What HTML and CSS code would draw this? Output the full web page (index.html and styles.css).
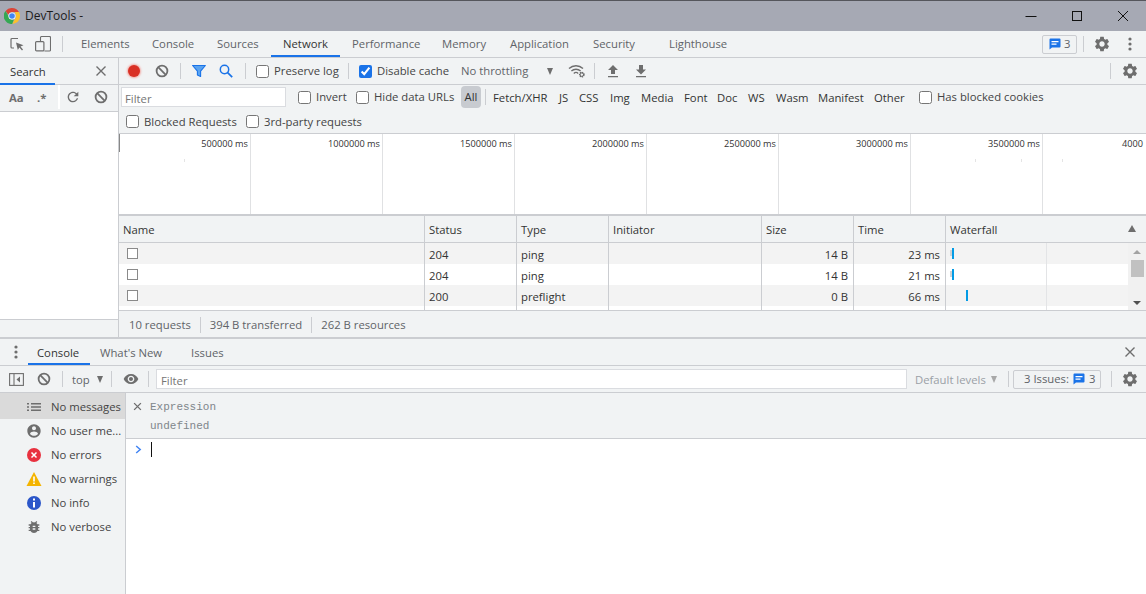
FILE: index.html
```html
<!DOCTYPE html>
<html lang="en">
<head>
<meta charset="utf-8">
<title>DevTools</title>
<link rel="stylesheet" href="styles.css">
</head>
<body>
<svg class="defs" width="0" height="0" aria-hidden="true">
  <symbol id="gear" viewBox="0 0 24 24"><path d="M19.14,12.94c.04-.3.06-.61.06-.94 0-.32-.02-.64-.07-.94l2.03-1.58c.18-.14.23-.41.12-.61l-1.92-3.32c-.12-.22-.37-.29-.59-.22l-2.39.96c-.5-.38-1.03-.7-1.62-.94l-.36-2.54c-.04-.24-.24-.41-.48-.41h-3.84c-.24 0-.43.17-.47.41l-.36 2.54c-.59.24-1.13.57-1.62.94l-2.39-.96c-.22-.08-.47 0-.59.22L2.74 8.87c-.12.21-.08.47.12.61l2.03 1.58c-.05.3-.09.63-.09.94s.02.64.07.94l-2.03 1.58c-.18.14-.23.41-.12.61l1.92 3.32c.12.22.37.29.59.22l2.39-.96c.5.38 1.03.7 1.62.94l.36 2.54c.05.24.24.41.48.41h3.84c.24 0 .44-.17.47-.41l.36-2.54c.59-.24 1.13-.56 1.62-.94l2.39.96c.22.08.47 0 .59-.22l1.92-3.32c.12-.22.07-.47-.12-.61l-2.01-1.58zM12 15.6c-1.98 0-3.6-1.62-3.6-3.6s1.62-3.6 3.6-3.6 3.6 1.62 3.6 3.6-1.62 3.6-3.6 3.6z" fill="#6e6e6e"/></symbol>
  <symbol id="block" viewBox="0 0 14 14"><circle cx="7" cy="7" r="5.4" fill="none" stroke="#6e6e6e" stroke-width="1.8"/><path d="M3.2 3.2l7.6 7.6" stroke="#6e6e6e" stroke-width="1.8"/></symbol>
  <symbol id="msg" viewBox="0 0 12 12"><path d="M1.5 0.5h9a1 1 0 0 1 1 1v7a1 1 0 0 1-1 1H3L0.5 11.5V1.5a1 1 0 0 1 1-1z" fill="#1a73e8"/><path d="M2.5 3h7v1.2h-7zM2.5 5.5h5v1.2h-5z" fill="#fff"/></symbol>
  <symbol id="close" viewBox="0 0 12 12"><path d="M1.5 1.5l9 9M10.5 1.5l-9 9" stroke="#6e6e6e" stroke-width="1.4" fill="none"/></symbol>
</svg>

<header class="titlebar">
  <svg class="chrome-logo" viewBox="0 0 16 16" width="16" height="16">
    <path d="M8 0a8 8 0 0 1 6.93 4H8a4 4 0 0 0-3.8 2.7L1.6 2.9A8 8 0 0 1 8 0z" fill="#db4437"/>
    <path d="M14.93 4A8 8 0 0 1 8.2 16l3.3-5.9A4 4 0 0 0 11.4 5.9L10.9 4z" fill="#fbc02d"/>
    <path d="M1.6 2.9l3.3 5.9a4 4 0 0 0 5 2.7L8.2 16A8 8 0 0 1 1.6 2.9z" fill="#34a853"/>
    <circle cx="8" cy="8" r="3.6" fill="#fff"/><circle cx="8" cy="8" r="2.8" fill="#4285f4"/>
  </svg>
  <span class="title-text">DevTools -</span>
  <div class="win-controls">
    <svg width="12" height="12" viewBox="0 0 12 12"><path d="M0.5 6.5h11" stroke="#111" fill="none"/></svg>
    <svg width="12" height="12" viewBox="0 0 12 12"><rect x="1.5" y="1.5" width="9" height="9" fill="none" stroke="#111"/></svg>
    <svg width="12" height="12" viewBox="0 0 12 12"><path d="M1 1l10 10M11 1L1 11" stroke="#111" fill="none"/></svg>
  </div>
</header>

<nav class="main-toolbar">
  <div class="mt-icons">
    <svg width="16" height="16" viewBox="0 0 16 16"><path d="M9 2.5H3a1 1 0 0 0-1 1V11a1 1 0 0 0 1 1h2" fill="none" stroke="#6e6e6e" stroke-width="1.2"/><path d="M7 6.5l7.5 2.8-3 1.2 2.5 3-1 .9-2.6-3-1.6 2.6z" fill="#6e6e6e"/></svg>
    <svg width="16" height="16" viewBox="0 0 16 16"><path d="M5.500 5V1.500a1 1 0 0 1 1-1h8a1 1 0 0 1 1 1V14a1 1 0 0 1-1 1H9.500" fill="none" stroke="#6e6e6e" stroke-width="1.100"/><rect x="0.6" y="5.600" width="8.300" height="9.300" rx="1" fill="none" stroke="#6e6e6e" stroke-width="1.200"/></svg>
  </div>
  <span class="sep mt-sep"></span>
  <div class="main-tabs">
    <span class="tab">Elements</span><span class="tab">Console</span><span class="tab">Sources</span><span class="tab active">Network</span><span class="tab">Performance</span><span class="tab">Memory</span><span class="tab">Application</span><span class="tab">Security</span><span class="tab">Lighthouse</span>
  </div>
  <div class="mt-right">
    <span class="issue-chip"><svg width="12" height="12"><use href="#msg"/></svg>3</span>
    <span class="sep"></span>
    <svg class="ic-gear" width="18" height="18"><use href="#gear"/></svg>
    <svg class="ic-dots" width="4" height="14" viewBox="0 0 4 14"><circle cx="2" cy="2" r="1.6" fill="#6e6e6e"/><circle cx="2" cy="7" r="1.6" fill="#6e6e6e"/><circle cx="2" cy="12" r="1.6" fill="#6e6e6e"/></svg>
  </div>
</nav>

<section class="top-pane">
  <aside class="search-panel">
    <div class="search-head">
      <span class="search-tab">Search</span>
      <svg class="search-close" width="12" height="12"><use href="#close"/></svg>
    </div>
    <div class="search-tools">
      <span class="aa">Aa</span><span class="regex">.*</span>
      <span class="search-btns">
        <svg width="16" height="16" viewBox="0 0 24 24"><path d="M17.65 6.35C16.2 4.9 14.21 4 12 4c-4.42 0-7.99 3.58-7.99 8s3.57 8 7.99 8c3.73 0 6.84-2.55 7.73-6h-2.08c-.82 2.33-3.04 4-5.65 4-3.31 0-6-2.69-6-6s2.69-6 6-6c1.66 0 3.14.69 4.22 1.78L13 11h7V4l-2.35 2.35z" fill="#6e6e6e"/></svg>
        <svg width="14" height="14"><use href="#block"/></svg>
      </span>
    </div>
    <div class="search-body"></div>
    <div class="search-foot"></div>
  </aside>

  <main class="network">
    <div class="net-toolbar">
      <span class="record"></span>
      <svg class="net-clear" width="14" height="14"><use href="#block"/></svg>
      <span class="sep s-a"></span>
      <svg class="net-filter" width="14" height="14" viewBox="0 0 14 14"><path d="M0.6 1.5h12.8L8.6 7.2v5.3l-3.2-1.6V7.2z" fill="#5aa3f0" stroke="#1a73e8" stroke-width="1.1" stroke-linejoin="round"/></svg>
      <svg class="net-search" width="14" height="14" viewBox="0 0 14 14"><circle cx="5.5" cy="5.5" r="4.2" fill="none" stroke="#1a73e8" stroke-width="1.5"/><path d="M8.6 8.6l4.6 4.6" stroke="#1a73e8" stroke-width="1.7"/></svg>
      <span class="sep s-b"></span>
      <label class="chk c-preserve"><input type="checkbox">Preserve log</label>
      <span class="sep s-c"></span>
      <label class="chk c-disable"><input type="checkbox" checked>Disable cache</label>
      <span class="throttle">No throttling</span>
      <span class="arrow a-throttle"></span>
      <svg class="net-wifi" width="18" height="14" viewBox="0 0 18 14"><path d="M1 4.5C5 .8 11 .8 15 4.5M3.4 7C6 4.6 10 4.6 12.6 7M5.8 9.4C7 8.3 9 8.3 10.2 9.4" fill="none" stroke="#6e6e6e" stroke-width="1.4"/><circle cx="13.8" cy="10.6" r="2.1" fill="none" stroke="#6e6e6e" stroke-width="1.5" stroke-dasharray="1.2 .6"/><circle cx="13.8" cy="10.6" r="1.8" fill="none" stroke="#6e6e6e"/></svg>
      <span class="sep s-d"></span>
      <svg class="net-up" width="12" height="14" viewBox="0 0 12 14"><path d="M6 1l5 5H8v4H4V6H1zM1 12h10v1.2H1z" fill="#6e6e6e"/></svg>
      <svg class="net-down" width="12" height="14" viewBox="0 0 12 14"><path d="M4 1h4v4.500h3L6 10.500 1 5.500h3zM1 12h10v1.200H1z" fill="#6e6e6e"/></svg>
      <span class="spacer"></span>
      <span class="sep s-e"></span>
      <svg class="net-gear" width="18" height="18"><use href="#gear"/></svg>
    </div>

    <div class="filter-bar">
      <div class="filter-row">
        <span class="filter-input">Filter</span>
        <label class="chk f-invert"><input type="checkbox">Invert</label>
        <label class="chk f-hide"><input type="checkbox">Hide data URLs</label>
        <span class="type-all">All</span>
        <span class="sep s-all"></span>
        <div class="types"><span>Fetch/XHR</span><span>JS</span><span>CSS</span><span>Img</span><span>Media</span><span>Font</span><span>Doc</span><span>WS</span><span>Wasm</span><span>Manifest</span><span>Other</span></div>
        <label class="chk f-cookies"><input type="checkbox">Has blocked cookies</label>
      </div>
      <div class="filter-row2">
        <label class="chk f-blocked"><input type="checkbox">Blocked Requests</label>
        <label class="chk f-third"><input type="checkbox">3rd-party requests</label>
      </div>
    </div>

    <div class="overview">
      <div class="ov-cell"><span>500000 ms</span></div>
      <div class="ov-cell"><span>1000000 ms</span></div>
      <div class="ov-cell"><span>1500000 ms</span></div>
      <div class="ov-cell"><span>2000000 ms</span></div>
      <div class="ov-cell"><span>2500000 ms</span></div>
      <div class="ov-cell"><span>3000000 ms</span></div>
      <div class="ov-cell"><span>3500000 ms</span></div>
      <div class="ov-cell"><span>4000</span></div>
      <i class="ov-handle"></i>
      <i class="ov-speck sp1"></i><i class="ov-speck sp2"></i><i class="ov-speck sp3"></i><i class="ov-speck sp4"></i>
    </div>

    <div class="table">
      <div class="t-row t-head">
        <div>Name</div><div>Status</div><div>Type</div><div>Initiator</div><div>Size</div><div>Time</div>
        <div class="t-wf">Waterfall<span class="sort-up"></span></div>
      </div>
      <div class="t-body">
        <div class="t-rows">
          <div class="t-row odd"><div><i class="cb"></i></div><div>204</div><div>ping</div><div></div><div class="r">14 B</div><div class="r">23 ms</div><div class="wf"><i class="w-wait"></i><i class="w-bar"></i><b></b></div></div>
          <div class="t-row"><div><i class="cb"></i></div><div>204</div><div>ping</div><div></div><div class="r">14 B</div><div class="r">21 ms</div><div class="wf"><i class="w-wait"></i><i class="w-bar"></i><b></b></div></div>
          <div class="t-row odd"><div><i class="cb"></i></div><div>200</div><div>preflight</div><div></div><div class="r">0 B</div><div class="r">66 ms</div><div class="wf"><i class="w-bar w-late"></i><b></b></div></div>
          <div class="t-row last"><div></div><div></div><div></div><div></div><div></div><div></div><div class="wf"><b></b></div></div>
        </div>
        <div class="scrollbar">
          <span class="sb-up"></span><span class="sb-thumb"></span><span class="sb-down"></span>
        </div>
      </div>
    </div>

    <div class="net-status">
      <span>10 requests</span><span class="sep"></span><span>394 B transferred</span><span class="sep"></span><span>262 B resources</span>
    </div>
  </main>
</section>

<section class="drawer">
  <div class="drawer-tabs">
    <svg class="ic-dots-d" width="4" height="14" viewBox="0 0 4 14"><circle cx="2" cy="2" r="1.6" fill="#6e6e6e"/><circle cx="2" cy="7" r="1.6" fill="#6e6e6e"/><circle cx="2" cy="12" r="1.6" fill="#6e6e6e"/></svg>
    <span class="dtab active">Console</span><span class="dtab">What's New</span><span class="dtab">Issues</span>
    <span class="spacer"></span>
    <svg class="drawer-close" width="12" height="12"><use href="#close"/></svg>
  </div>
  <div class="console-toolbar">
    <svg class="ct-side" width="15" height="13" viewBox="0 0 15 13"><rect x="0.6" y="0.6" width="13.800" height="11.800" fill="none" stroke="#6e6e6e" stroke-width="1.100"/><path d="M5 1v11" stroke="#6e6e6e" stroke-width="1.100"/><path d="M11 3.500v6L7.500 6.500z" fill="#6e6e6e"/></svg>
    <svg class="ct-clear" width="14" height="14"><use href="#block"/></svg>
    <span class="sep s-1"></span>
    <span class="ct-top">top</span><span class="arrow a-top"></span>
    <span class="sep s-2"></span>
    <svg class="ct-eye" width="16" height="16" viewBox="0 0 24 24"><path d="M12 4.500C7 4.500 2.730 7.610 1 12c1.730 4.390 6 7.500 11 7.500s9.270-3.110 11-7.500c-1.730-4.390-6-7.500-11-7.500zM12 17c-2.760 0-5-2.240-5-5s2.240-5 5-5 5 2.240 5 5-2.240 5-5 5zm0-8c-1.660 0-3 1.340-3 3s1.340 3 3 3 3-1.340 3-3-1.340-3-3-3z" fill="#6e6e6e"/></svg>
    <span class="sep s-3"></span>
    <span class="ct-filter">Filter</span>
    <span class="ct-levels">Default levels</span><span class="arrow a-levels"></span>
    <span class="sep s-4"></span>
    <span class="ct-issues">3 Issues: <svg width="12" height="12"><use href="#msg"/></svg> 3</span>
    <span class="sep s-5"></span>
    <svg class="ct-gear" width="18" height="18"><use href="#gear"/></svg>
  </div>
  <div class="console-main">
    <aside class="console-side">
      <div class="cs-item selected"><svg width="14" height="14" viewBox="0 0 14 14"><path d="M0 3h2v1.600H0zM4 3h10v1.600H4zM0 6.200h2v1.600H0zM4 6.200h10v1.600H4zM0 9.400h2V11H0zM4 9.400h10V11H4z" fill="#6e6e6e"/></svg>No messages</div>
      <div class="cs-item"><svg width="16" height="16" viewBox="0 0 24 24"><path d="M12 2C6.480 2 2 6.480 2 12s4.480 10 10 10 10-4.480 10-10S17.520 2 12 2zm0 3c1.660 0 3 1.340 3 3s-1.340 3-3 3-3-1.340-3-3 1.340-3 3-3zm0 14.200c-2.500 0-4.710-1.280-6-3.220.030-1.990 4-3.080 6-3.080 1.990 0 5.970 1.090 6 3.080-1.290 1.940-3.500 3.220-6 3.220z" fill="#6e6e6e"/></svg>No user me...</div>
      <div class="cs-item"><svg width="16" height="16" viewBox="0 0 16 16"><circle cx="8" cy="8" r="7" fill="#e8313f"/><path d="M5.500 5.500l5 5M10.500 5.500l-5 5" stroke="#fff" stroke-width="1.500"/></svg>No errors</div>
      <div class="cs-item"><svg width="16" height="16" viewBox="0 0 16 16"><path d="M8 1l7.500 14H.5z" fill="#f4b400"/><path d="M7.200 5.500h1.600v5H7.200zM7.200 11.500h1.600v1.600H7.200z" fill="#fff"/></svg>No warnings</div>
      <div class="cs-item"><svg width="16" height="16" viewBox="0 0 16 16"><circle cx="8" cy="8" r="7" fill="#2b56c9"/><path d="M7 3.500h2v2H7zM7 7h2v5.500H7z" fill="#fff"/></svg>No info</div>
      <div class="cs-item"><svg width="16" height="16" viewBox="0 0 24 24"><path d="M20 8h-2.810c-.45-.78-1.070-1.450-1.820-1.960L17 4.410 15.590 3l-2.170 2.170C12.960 5.060 12.490 5 12 5c-.49 0-.96.060-1.410.170L8.410 3 7 4.410l1.620 1.630C7.880 6.550 7.260 7.220 6.810 8H4v2h2.090c-.050.330-.090.660-.090 1v1H4v2h2v1c0 .340.040.670.090 1H4v2h2.810c1.040 1.790 2.970 3 5.190 3s4.150-1.210 5.190-3H20v-2h-2.090c.050-.330.090-.660.090-1v-1h2v-2h-2v-1c0-.340-.040-.670-.090-1H20V8zm-6 8h-4v-2h4v2zm0-4h-4v-2h4v2z" fill="#6e6e6e"/></svg>No verbose</div>
    </aside>
    <div class="console-out">
      <div class="live">
        <svg class="live-x" width="9" height="9" viewBox="0 0 12 12"><path d="M1.500 1.500l9 9M10.500 1.500l-9 9" stroke="#6e6e6e" stroke-width="1.800" fill="none"/></svg>
        <div class="live-text"><div>Expression</div><div>undefined</div></div>
      </div>
      <div class="prompt">
        <svg width="7" height="9" viewBox="0 0 7 9"><path d="M1.200 1l4 3.500-4 3.500" fill="none" stroke="#4285f4" stroke-width="1.500"/></svg>
        <i class="caret"></i>
      </div>
    </div>
  </div>
</section>
</body>
</html>
```
FILE: styles.css
```css
* { box-sizing: border-box; }
html, body { margin: 0; height: 100%; }
body {
  width: 1146px; height: 594px; overflow: hidden;
  font: 11.3px/16px "Open Sans", "Noto Sans", sans-serif;
  color: #333; background: #fff;
  display: flex; flex-direction: column;
}
.defs { position: absolute; }
svg { display: block; flex: none; }
i { display: block; }
.spacer { flex: 1; }
.sep { display: block; width: 1px; height: 16px; background: #cbcdd1; flex: none; }

/* title bar */
.titlebar {
  height: 31px; background: #a6a9b4; border-top: 1px solid #55565c;
  display: flex; align-items: center; padding-left: 4px; flex: none;
}
.chrome-logo { margin-right: 5px; }
.title-text { font-size: 12px; color: #1c1c1c; }
.win-controls { margin-left: auto; display: flex; gap: 34px; padding-right: 17px; }

/* main toolbar */
.main-toolbar {
  height: 27px; background: #f1f3f4; border-bottom: 1px solid #cbcdd1;
  display: flex; align-items: center; flex: none; padding-left: 9px;
}
.mt-icons { display: flex; gap: 10px; width: 43px; }
.mt-sep { margin: 0 6px 0 10px; }
.main-tabs {
  height: 26px; display: grid; align-self: flex-start;
  grid-template-columns: 71px 65px 66px 69px 90px 68px 83px 76px 90px;
}
.tab { padding: 5px 0 0 12px; color: #5f6368; white-space: nowrap; }
.tab.active { color: #333; box-shadow: inset 0 -2px 0 #1a73e8; }
.mt-right { margin-left: auto; display: flex; align-items: center; padding-right: 14px; }
.issue-chip {
  width: 35px; height: 19px; border: 1px solid #cbcdd1; border-radius: 2px; background: #f1f3f4;
  display: flex; align-items: center; gap: 3px; padding-left: 6px; color: #5f6368;
  margin-right: 6px;
}
.ic-gear { margin: 0 17px 0 9px; }

/* top pane */
.top-pane { height: 281px; display: flex; flex: none; border-bottom: 2px solid #cbcdd1; }
.search-panel {
  width: 119px; flex: none; display: flex; flex-direction: column;
  border-right: 1px solid #cbcdd1;
}
.search-head {
  height: 27px; background: #f1f3f4; border-bottom: 1px solid #cbcdd1;
  display: flex; align-items: center; justify-content: space-between;
  padding-right: 11px;
}
.search-tab { width: 55px; height: 27px; padding: 6px 0 0 10px; box-shadow: inset 0 -2px 0 #1a73e8; }
.search-tools {
  height: 27px; background: #f1f3f4; border-bottom: 1px solid #cbcdd1;
  display: flex; align-items: center;
}
.aa { font-weight: 700; color: #6e6e6e; padding-left: 9px; width: 37px; }
.regex { font-weight: 700; color: #6e6e6e; width: 21px; }
.search-btns {
  background: #f1f3f4; border-left: 2px solid #fff; height: 24px; display: flex; gap: 13px;
  align-items: center; padding-left: 5px; margin-top: -2px;
}
.search-body { flex: 1; background: #fff; }
.search-foot { height: 18px; background: #f1f3f4; border-top: 1px solid #cbcdd1; }

.network { flex: 1; min-width: 0; display: flex; flex-direction: column; background: #f1f3f4; }

/* network toolbar */
.net-toolbar {
  height: 27px; border-bottom: 1px solid #cbcdd1; display: flex; align-items: center; flex: none;
  padding-left: 9px;
}
.record { width: 12px; height: 12px; border-radius: 50%; background: #d93025; box-shadow: 0 0 2px 1px #f2a8a2; }
.net-clear { margin-left: 15px; }
.s-a { margin-left: 11px; }
.net-filter { margin-left: 11px; }
.net-search { margin-left: 13px; }
.s-b { margin-left: 12px; }
.chk { display: flex; align-items: center; white-space: nowrap; color: #444; }
.chk input { width: 13px; height: 13px; margin: 0 5px 0 0; accent-color: #1a73e8; flex: none; }
.c-preserve { margin-left: 10px; width: 83px; }
.s-c { margin-left: 9px; }
.c-disable { margin-left: 10px; width: 91px; }
.throttle { margin-left: 11px; color: #5f6368; width: 83px; white-space: nowrap; }
.arrow { display: block; width: 0; height: 0; border-left: 3.5px solid transparent; border-right: 3.5px solid transparent; border-top: 7px solid #6e6e6e; flex: none; }
.a-throttle { margin-left: 3px; }
.net-wifi { margin-left: 15px; }
.s-d { margin-left: 8px; }
.net-up { margin-left: 12px; }
.net-down { margin-left: 16px; }
.s-e { margin-right: 10px; }
.net-gear { margin-right: 7px; }

/* filter bar */
.filter-bar { height: 49px; border-bottom: 1px solid #cbcdd1; flex: none; }
.filter-row { height: 27px; display: flex; align-items: center; padding: 0 0 3px 2px; }
.filter-input {
  width: 165px; height: 20px; background: #fff; border: 1px solid #dadce0;
  padding: 3px 3px 0; color: #757575;
}
.f-invert { margin-left: 12px; width: 49px; }
.f-hide { margin-left: 9px; width: 105px; }
.type-all {
  width: 20px; height: 22px; background: #c8cbd0; color: #333; border-radius: 4px;
  text-align: center; line-height: 22px;
}
.s-all { margin: 0 7px 0 4px; }
.types {
  display: grid; width: 426px; margin-top: 2px;
  grid-template-columns: 66px 20px 31px 31px 43px 33px 31px 28px 42px 56px 45px;
  color: #333; white-space: nowrap;
}
.filter-row2 { height: 21px; display: flex; align-items: center; padding: 0 0 2px 7px; }
.f-blocked { width: 120px; }

/* overview */
.overview {
  height: 81px; background: #fff; display: grid; flex: none; position: relative;
  grid-template-columns: repeat(8, 132px); overflow: hidden;
  border-bottom: 1px solid #cbcdd1;
}
.ov-cell {
  border-right: 1px solid #e0e1e3; font-size: 9.2px; text-align: right; padding: 2px 2px 0 0;
  white-space: nowrap; color: #333;
}
.ov-cell:nth-child(8) { border-right: 0; text-align: left; padding-left: 79px; }
.ov-handle { position: absolute; left: 0; top: 0; width: 1px; height: 18px; background: #888; }
.ov-speck { position: absolute; top: 25px; width: 1px; height: 3px; background: #e4e4e4; }
.sp1 { left: 65px; }
.sp2 { left: 856px; }
.sp3 { left: 902px; }
.sp4 { left: 943px; }

/* table */
.table { flex: none; height: 95px; display: flex; flex-direction: column; border-top: 1px solid #cbcdd1; }
.t-row { display: grid; grid-template-columns: 306px 92px 92px 153px 92px 92px 1fr; }
.t-row > div { border-right: 1px solid #cbcdd1; padding: 0 4px; white-space: nowrap; }
.t-row > div:last-child { border-right: 0; }
.t-head { height: 27px; flex: none; border-bottom: 1px solid #cbcdd1; line-height: 27px; }
.t-head > div { height: 26px; }
.t-wf { position: relative; }
.sort-up {
  position: absolute; right: 10px; top: 9px; width: 0; height: 0;
  border-left: 4px solid transparent; border-right: 4px solid transparent; border-bottom: 7px solid #6e6e6e;
}
.t-body { flex: 1; display: flex; min-height: 0; background: #fff; }
.t-rows { flex: none; width: 1009px; overflow: hidden; }
.t-rows .t-row { height: 21px; line-height: 23px; background: #fff; }
.t-rows .t-row.odd { background: #f3f3f3; }
.t-rows .t-row.last { height: 5px; }
.t-row > .r { text-align: right; padding-right: 5px; }
.cb { width: 11px; height: 11px; margin: 5px 0 0 4px; border: 1px solid #8a8a8a; background: #fff; }
.wf { position: relative; }
.wf b { position: absolute; left: 100px; top: 0; bottom: 0; width: 1px; background: #e3e4e6; }
.w-wait { position: absolute; left: 4px; top: 7px; width: 2px; height: 6px; background: #d0d2d5; }
.w-bar { position: absolute; left: 6px; top: 5px; width: 2px; height: 11px; background: #039be5; }
.w-late { left: 20px; top: 5px; }
.scrollbar { flex: 1; background: #f1f1f1; display: flex; flex-direction: column; align-items: center; }
.sb-up { margin-top: 7px; border-left: 4px solid transparent; border-right: 4px solid transparent; border-bottom: 4px solid #a3a3a3; }
.sb-thumb { margin-top: 6px; width: 13px; height: 17px; background: #c1c1c1; }
.sb-down { margin-top: auto; margin-bottom: 5px; border-left: 4px solid transparent; border-right: 4px solid transparent; border-top: 4px solid #505050; }

.net-status {
  flex: 1; border-top: 1px solid #cbcdd1; display: flex; align-items: center; gap: 9px; padding: 2px 0 0 10px; color: #5f6368;
}

/* drawer */
.drawer { flex: 1; min-height: 0; display: flex; flex-direction: column; }
.drawer-tabs {
  height: 27px; background: #f1f3f4; border-bottom: 1px solid #cbcdd1; flex: none;
  display: flex; align-items: center; padding: 0 10px 0 14px;
}
.ic-dots-d { margin-right: 10px; }
.dtab { height: 26px; padding: 6px 10px 0 10px; color: #5f6368; align-self: flex-start; white-space: nowrap; }
.dtab.active { width: 62px; padding-left: 9px; color: #333; box-shadow: inset 0 -2px 0 #1a73e8; }
.dtab:nth-of-type(3) { margin-left: 9px; }
.console-toolbar {
  height: 27px; background: #f1f3f4; border-bottom: 1px solid #cbcdd1; flex: none;
  display: flex; align-items: center; padding-left: 9px;
}
.ct-clear { margin-left: 13px; }
.s-1 { margin-left: 11px; }
.ct-top { margin-left: 9px; width: 25px; color: #5f6368; padding-top: 2px; }
.s-2 { margin-left: 8px; }
.ct-eye { margin-left: 11px; }
.s-3 { margin-left: 9px; }
.ct-filter { margin-left: 7px; width: 751px; height: 20px; background: #fff; border: 1px solid #dadce0; padding: 3px 4px 0; color: #757575; }
.ct-levels { margin-left: 8px; width: 76px; color: #9aa0a6; white-space: nowrap; padding-top: 2px; }
.a-levels { border-top-color: #a8a8a8; }
.s-4 { margin-left: 11px; }
.ct-issues {
  margin-left: 4px; width: 88px; height: 19px; border: 1px solid #cbcdd1; border-radius: 2px;
  display: flex; align-items: center; gap: 4px; padding-left: 10px; color: #5f6368; white-space: nowrap;
}
.s-5 { margin-left: 10px; }
.ct-gear { margin-left: 9px; }

.console-main { flex: 1; display: flex; min-height: 0; }
.console-side { width: 126px; flex: none; background: #f1f3f4; border-right: 1px solid #cbcdd1; }
.cs-item {
  height: 24px; display: flex; align-items: center; gap: 9px; padding-left: 26px;
  color: #444; white-space: nowrap; overflow: hidden;
}
.cs-item.selected { background: #dadada; padding: 2px 0 0 27px; gap: 10px; height: 26px; }
.console-out { flex: 1; min-width: 0; display: flex; flex-direction: column; }
.live {
  height: 46px; background: #f1f3f4; border-bottom: 1px solid #cbcdd1; flex: none;
  display: flex; padding: 4px 0 0 7px;
}
.live-x { margin-top: 5px; }
.live-text { font: 11px/19px "Liberation Mono", monospace; color: #80868b; margin: 1px 0 0 8px; }
.prompt { display: flex; padding: 3px 0 0 9px; }
.prompt svg { margin-top: 3px; }
.caret { width: 1px; height: 15px; background: #111; margin-left: 9px; }
```
